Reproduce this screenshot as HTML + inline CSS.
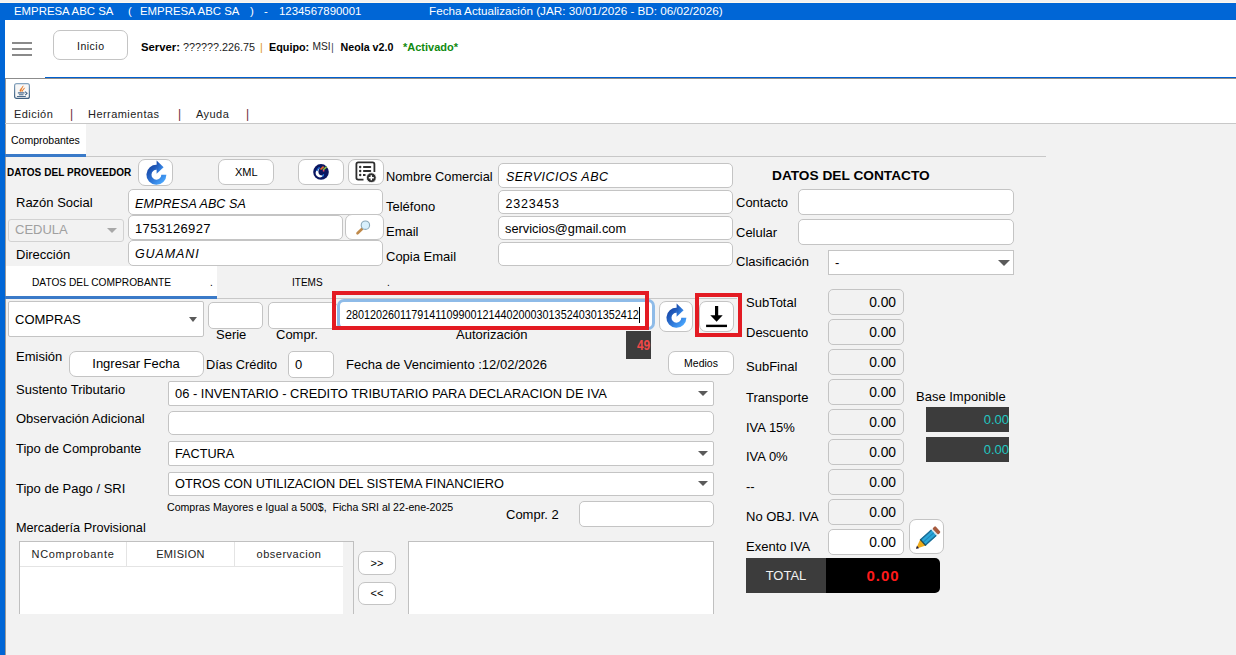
<!DOCTYPE html>
<html><head><meta charset="utf-8">
<style>
*{box-sizing:border-box;margin:0;padding:0}
html,body{width:1236px;height:655px;overflow:hidden;background:#f2f2f2;font-family:"Liberation Sans",sans-serif;color:#000;position:relative}
.a{position:absolute}
.t{position:absolute;white-space:nowrap;line-height:20px;height:20px}
.fld{position:absolute;background:#fff;border:1px solid #c4c4c4;border-radius:5px}
.btn{position:absolute;background:#fff;border:1px solid #c4c4c4;border-radius:7px}
.cmb{position:absolute;background:#fff;border:1px solid #c4c4c4}
.arr{position:absolute;width:0;height:0;border-left:6px solid transparent;border-right:6px solid transparent;border-top:6px solid #5a5a5a}
.lbl{font-size:13px;margin-top:1px}
</style></head><body>
<!-- top strip -->
<div class="a" style="left:0;top:0;width:1236px;height:2px;background:#f2f2f2"></div>
<div class="a" style="left:0;top:2px;width:1236px;height:1px;background:#fdf8ee"></div>
<div class="a" style="left:0;top:3px;width:1236px;height:17px;background:#0066d6"></div>
<div class="a" style="left:0;top:3px;width:5px;height:652px;background:#0066d6"></div>
<!-- title text -->
<div class="t" id="tt1" style="left:14px;top:1px;color:#fff;font-size:11.4px">EMPRESA ABC SA</div>
<div class="t" id="tt2" style="left:128px;top:1px;color:#fff;font-size:11.4px">(</div>
<div class="t" id="tt3" style="left:140px;top:1px;color:#fff;font-size:11.4px">EMPRESA ABC SA</div>
<div class="t" id="tt4" style="left:250px;top:1px;color:#fff;font-size:11.4px">)</div>
<div class="t" id="tt5" style="left:264px;top:1px;color:#fff;font-size:11.4px">-</div>
<div class="t" id="tt6" style="left:279px;top:1px;color:#fff;font-size:11.4px">1234567890001</div>
<div class="t" id="tt7" style="left:429px;top:1px;color:#fff;font-size:11.7px">Fecha Actualización (JAR: 30/01/2026 - BD: 06/02/2026)</div>

<!-- header white -->
<div class="a" style="left:5px;top:20px;width:1231px;height:58px;background:#fff"></div>
<div class="a" style="left:12px;top:42px;width:20px;height:2px;background:#8a8a8a"></div>
<div class="a" style="left:12px;top:48px;width:20px;height:2px;background:#8a8a8a"></div>
<div class="a" style="left:12px;top:54px;width:20px;height:2px;background:#8a8a8a"></div>
<div class="btn" style="left:53px;top:30px;width:75px;height:30px;border-radius:7px"></div>
<div class="t" id="inicio" style="left:77px;top:35.5px;font-size:10.5px;letter-spacing:0.5px;color:#111">Inicio</div>
<div class="t" id="srv1" style="left:141px;top:37px;font-size:11.3px;font-weight:bold">Server:</div>
<div class="t" id="srv2" style="left:183px;top:37px;font-size:10.8px;color:#222">??????.226.75</div>
<div class="t" id="srv3" style="left:260px;top:37px;font-size:11px;color:#e0962a">|</div>
<div class="t" id="srv4" style="left:269px;top:37px;font-size:10.8px;font-weight:bold">Equipo:</div>
<div class="t" id="srv5" style="left:312.5px;top:37px;font-size:10.2px;color:#222">MSI</div>
<div class="t" id="srv6" style="left:331px;top:37px;font-size:11px;color:#50506a">|</div>
<div class="t" id="srv7" style="left:340.5px;top:37px;font-size:10.7px;font-weight:bold">Neola v2.0</div>
<div class="t" id="srv8" style="left:403px;top:37px;font-size:11px;font-weight:bold;color:#108a10">*Activado*</div>
<div class="a" style="left:5px;top:78px;width:1231px;height:1px;background:#8c8c8c"></div>
<div class="a" style="left:45px;top:77px;width:1191px;height:1px;background:#0060d0"></div>

<!-- menu area -->
<div class="a" style="left:5px;top:79px;width:1231px;height:44px;background:#fff"></div>
<div class="a" style="left:5px;top:79px;width:1px;height:576px;background:#9a9a9a"></div>

<div class="t" id="menu" style="left:14px;top:103.5px;font-size:11px;letter-spacing:0.45px;color:#222">Edición</div>
<div class="t" style="left:70px;top:103.5px;font-size:12px;color:#6a2a3a">|</div>
<div class="t" id="herr" style="left:88px;top:103.5px;font-size:11px;letter-spacing:0.45px;color:#222">Herramientas</div>
<div class="t" style="left:178px;top:103.5px;font-size:12px;color:#6a2a3a">|</div>
<div class="t" id="ayuda" style="left:196px;top:103.5px;font-size:11px;letter-spacing:0.45px;color:#222">Ayuda</div>
<div class="t" style="left:246px;top:103.5px;font-size:12px;color:#6a2a3a">|</div>
<div class="a" style="left:5px;top:123px;width:1231px;height:1px;background:#c8c8c8"></div>

<!-- main tab -->
<div class="a" style="left:6px;top:124px;width:80px;height:31px;background:#fff"></div>
<div class="a" style="left:5px;top:154px;width:81px;height:3px;background:#3a7ac8"></div>
<div class="t" id="comp" style="left:11px;top:130px;font-size:10.5px">Comprobantes</div>
<div class="a" style="left:86px;top:156px;width:960px;height:1px;background:#c8c8c8"></div>


<!-- PROVEEDOR -->
<div class="t" id="dprov" style="left:7px;top:163px;font-size:10px;font-weight:bold;letter-spacing:0.05px">DATOS DEL PROVEEDOR</div>
<div class="btn" style="left:138px;top:159px;width:35px;height:27px"></div>
<div class="btn" style="left:218px;top:159px;width:55.5px;height:25.5px"></div>
<div class="t" id="xml" style="left:235px;top:162px;font-size:11px">XML</div>
<div class="btn" style="left:298px;top:159px;width:45.5px;height:25.5px"></div>
<div class="btn" style="left:348px;top:159px;width:35.5px;height:25.5px"></div>

<div class="t lbl" id="razon" style="left:16px;top:192px">Razón Social</div>
<div class="fld" style="left:128px;top:189px;width:255px;height:26px"></div>
<div class="t" id="vrazon" style="left:135px;top:193.5px;font-size:12.5px;font-style:italic;letter-spacing:0.1px">EMPRESA ABC SA</div>
<div class="cmb" style="left:8px;top:219px;width:116px;height:23px;background:#f2f2f2;border-color:#d2d2d2;border-radius:3px"></div>
<div class="t" id="ced" style="left:15px;top:220px;font-size:13px;color:#a0a0a0">CEDULA</div>
<div class="arr" style="left:107px;top:228px;border-top-color:#a8a8a8;border-left-width:5px;border-right-width:5px;border-top-width:5px"></div>
<div class="fld" style="left:128px;top:214.5px;width:215px;height:25.5px"></div>
<div class="t" id="vced" style="left:135px;top:218.5px;font-size:13px;letter-spacing:0.35px">1753126927</div>
<div class="btn" style="left:345px;top:214px;width:38.5px;height:26px"></div>
<div class="t lbl" id="dir" style="left:16px;top:244px">Dirección</div>
<div class="fld" style="left:128px;top:240px;width:255px;height:26px"></div>
<div class="t" id="vdir" style="left:135px;top:243.5px;font-size:12.5px;font-style:italic;letter-spacing:0.9px">GUAMANI</div>

<div class="t lbl" id="ncom" style="left:386px;top:166px;font-size:12.8px">Nombre Comercial</div>
<div class="fld" style="left:498px;top:163px;width:235px;height:25px"></div>
<div class="t" id="vncom" style="left:506px;top:166.5px;font-size:12.5px;font-style:italic;letter-spacing:0.45px">SERVICIOS ABC</div>
<div class="t lbl" id="tel" style="left:386px;top:196px">Teléfono</div>
<div class="fld" style="left:498px;top:190px;width:235px;height:24px"></div>
<div class="t" id="vtel" style="left:505.5px;top:193.5px;font-size:12.5px;letter-spacing:0.8px">2323453</div>
<div class="t lbl" id="email" style="left:386px;top:221px">Email</div>
<div class="fld" style="left:498px;top:216px;width:235px;height:24px"></div>
<div class="t" id="vemail" style="left:505px;top:218.5px;font-size:12.8px;letter-spacing:0px">servicios@gmail.com</div>
<div class="t lbl" id="cemail" style="left:386px;top:246px">Copia Email</div>
<div class="fld" style="left:498px;top:242px;width:235px;height:24px"></div>

<div class="t" id="dcont" style="left:772px;top:166px;font-size:13.7px;font-weight:bold">DATOS DEL CONTACTO</div>
<div class="t lbl" id="contacto" style="left:736px;top:192px">Contacto</div>
<div class="fld" style="left:798px;top:189px;width:216px;height:26px"></div>
<div class="t lbl" id="celular" style="left:736px;top:222px">Celular</div>
<div class="fld" style="left:798px;top:219px;width:216px;height:26px"></div>
<div class="t lbl" id="clasif" style="left:736px;top:251px">Clasificación</div>
<div class="cmb" style="left:828px;top:250px;width:186px;height:25px"></div>
<div class="t" style="left:835px;top:253px;font-size:13px">-</div>
<div class="arr" style="left:998px;top:260px"></div>

<!-- COMPROBANTE TABS -->
<div class="a" style="left:6px;top:266px;width:211px;height:30px;background:#fff"></div>
<div class="a" style="left:5px;top:296px;width:212px;height:3px;background:#3a7ac8"></div>
<div class="t" id="tdc" style="left:32px;top:273px;font-size:10.2px">DATOS DEL COMPROBANTE</div>
<div class="t" style="left:210px;top:273px;font-size:10px">.</div>
<div class="t" id="titems" style="left:292px;top:273px;font-size:10px">ITEMS</div>
<div class="t" style="left:387px;top:273px;font-size:10px">.</div>

<div class="a" style="left:217px;top:298px;width:520px;height:1px;background:#c8c8c8"></div>
<!-- COMPROBANTE -->
<div class="cmb" style="left:8px;top:301px;width:196px;height:35.5px;border-radius:2px"></div>
<div class="t" id="compras" style="left:15px;top:310px;font-size:13px">COMPRAS</div>
<div class="arr" style="left:189px;top:317px;border-left-width:4.5px;border-right-width:4.5px;border-top-width:5.5px"></div>
<div class="fld" style="left:208px;top:302px;width:55px;height:27px"></div>
<div class="fld" style="left:268px;top:302px;width:70px;height:27px"></div>
<div class="t lbl" id="serie" style="left:216px;top:324px">Serie</div>
<div class="t lbl" id="compr" style="left:276px;top:324px">Compr.</div>

<div class="a" style="left:337px;top:299px;width:318px;height:31px;border:3px solid #8ebbe8;border-radius:7px;background:#fff"></div>
<div class="t" id="aut" style="left:345.5px;top:305px;font-size:13.5px;transform:scaleX(0.80);transform-origin:0 0">2801202601179141109900121440200030135240301352412</div>
<div class="a" style="left:639px;top:307px;width:1px;height:16px;background:#000"></div>
<div class="a" style="left:332px;top:291px;width:317px;height:39px;border:4px solid #e31b23"></div>
<div class="t lbl" id="autz" style="left:456px;top:324px">Autorización</div>
<div class="a" style="left:626px;top:331px;width:25px;height:28px;background:#3c3c3c"></div>
<div class="t" id="n49" style="left:637px;top:334.5px;font-size:14px;font-weight:bold;color:#f04848;transform:scaleX(0.85);transform-origin:0 0">49</div>
<div class="btn" style="left:659px;top:301px;width:34px;height:31px"></div>
<div class="btn" style="left:699px;top:301px;width:35px;height:31px"></div>
<div class="a" style="left:695px;top:293px;width:47px;height:44px;border:4px solid #e31b23"></div>

<div class="t lbl" id="emision" style="left:16px;top:346px">Emisión</div>
<div class="btn" style="left:68.5px;top:351px;width:135px;height:25.5px"></div>
<div class="t lbl" id="ingf" style="left:69px;top:353px;width:134px;text-align:center">Ingresar Fecha</div>
<div class="t lbl" id="dias" style="left:206px;top:354px;font-size:12.8px">Días Crédito</div>
<div class="fld" style="left:288px;top:351px;width:46px;height:26.5px"></div>
<div class="t lbl" style="left:295px;top:354px">0</div>
<div class="t lbl" id="fven" style="left:346px;top:354px">Fecha de Vencimiento :12/02/2026</div>
<div class="btn" style="left:668px;top:351px;width:66px;height:24px"></div>
<div class="t" id="medios" style="left:668px;top:353px;width:66px;text-align:center;font-size:10.5px">Medios</div>

<div class="t lbl" id="sust" style="left:16px;top:379px">Sustento Tributario</div>
<div class="cmb" style="left:168px;top:381px;width:546px;height:25px;border-radius:2px"></div>
<div class="t lbl" id="vsust" style="left:175px;top:383px;font-size:12.9px">06 - INVENTARIO - CREDITO TRIBUTARIO PARA DECLARACION DE IVA</div>
<div class="arr" style="left:698px;top:391px;border-left-width:5px;border-right-width:5px;border-top-width:5px"></div>
<div class="t lbl" id="obs" style="left:16px;top:408px">Observación Adicional</div>
<div class="fld" style="left:168px;top:411px;width:546px;height:23.5px"></div>
<div class="t lbl" id="tcomp" style="left:16px;top:438px">Tipo de Comprobante</div>
<div class="cmb" style="left:168px;top:441px;width:546px;height:25px;border-radius:2px"></div>
<div class="t lbl" id="vfact" style="left:175px;top:443px;font-size:12.7px">FACTURA</div>
<div class="arr" style="left:698px;top:451px;border-left-width:5px;border-right-width:5px;border-top-width:5px"></div>
<div class="t lbl" id="tpago" style="left:16px;top:478px">Tipo de Pago / SRI</div>
<div class="cmb" style="left:168px;top:471.5px;width:546px;height:24.5px;border-radius:2px"></div>
<div class="t lbl" id="votros" style="left:175px;top:473px;font-size:12.75px">OTROS CON UTILIZACION DEL SISTEMA FINANCIERO</div>
<div class="arr" style="left:698px;top:481px;border-left-width:5px;border-right-width:5px;border-top-width:5px"></div>
<div class="t" id="cmay" style="left:167px;top:497px;font-size:10.6px">Compras Mayores e Igual a 500$,&nbsp; Ficha SRI al 22-ene-2025</div>
<div class="t lbl" id="compr2" style="left:506px;top:504px">Compr. 2</div>
<div class="fld" style="left:578.5px;top:501px;width:135.5px;height:26px"></div>
<div class="t lbl" id="merc" style="left:16px;top:517px;font-size:12.7px">Mercadería Provisional</div>

<!-- table -->
<div class="a" style="left:18.5px;top:541px;width:335.5px;height:73px;border:1px solid #c0c0c0;border-bottom:none;background:#f2f2f2"></div>
<div class="a" style="left:20px;top:542px;width:323px;height:72px;background:#fff"></div>
<div class="a" style="left:20px;top:566px;width:323px;height:1px;background:#e4e4e4"></div>
<div class="a" style="left:126px;top:542px;width:1px;height:24px;background:#e4e4e4"></div>
<div class="a" style="left:234px;top:542px;width:1px;height:24px;background:#e4e4e4"></div>
<div class="t" id="hnc" style="left:20px;top:544px;width:106px;text-align:center;font-size:11px;letter-spacing:0.7px;color:#222">NComprobante</div>
<div class="t" id="hem" style="left:127px;top:544px;width:107px;text-align:center;font-size:11px;letter-spacing:0.3px;color:#222">EMISION</div>
<div class="t" id="hob" style="left:235px;top:544px;width:108px;text-align:center;font-size:11px;letter-spacing:0.5px;color:#222">observacion</div>
<div class="btn" style="left:358px;top:551px;width:38px;height:24px"></div>
<div class="t" style="left:358px;top:553px;width:38px;text-align:center;font-size:11px">&gt;&gt;</div>
<div class="btn" style="left:358px;top:582px;width:38px;height:23px"></div>
<div class="t" style="left:358px;top:583px;width:38px;text-align:center;font-size:11px">&lt;&lt;</div>
<div class="a" style="left:408px;top:541px;width:306px;height:73px;border:1px solid #c0c0c0;border-bottom:none;background:#fff"></div>

<!-- totals -->
<div class="t lbl" id="lsub" style="left:746px;top:292px">SubTotal</div>
<div class="t lbl" style="left:746px;top:322px">Descuento</div>
<div class="t lbl" style="left:746px;top:356px">SubFinal</div>
<div class="t lbl" style="left:746px;top:387px">Transporte</div>
<div class="t lbl" style="left:746px;top:417px">IVA 15%</div>
<div class="t lbl" style="left:746px;top:446px">IVA 0%</div>
<div class="t lbl" style="left:746px;top:476px">--</div>
<div class="t lbl" style="left:746px;top:506px">No OBJ. IVA</div>
<div class="t lbl" style="left:746px;top:536px">Exento IVA</div>
<div class="fld" style="left:828px;top:289px;width:76px;height:26px;background:#f2f2f2"></div>
<div class="t lbl" style="left:828px;top:292px;width:68px;text-align:right;font-size:13.8px">0.00</div>
<div class="fld" style="left:828px;top:319px;width:76px;height:26px;background:#f2f2f2"></div>
<div class="t lbl" style="left:828px;top:322px;width:68px;text-align:right;font-size:13.8px">0.00</div>
<div class="fld" style="left:828px;top:349px;width:76px;height:26px;background:#f2f2f2"></div>
<div class="t lbl" style="left:828px;top:352px;width:68px;text-align:right;font-size:13.8px">0.00</div>
<div class="fld" style="left:828px;top:379px;width:76px;height:26px;background:#f2f2f2"></div>
<div class="t lbl" style="left:828px;top:382px;width:68px;text-align:right;font-size:13.8px">0.00</div>
<div class="fld" style="left:828px;top:409px;width:76px;height:26px;background:#f2f2f2"></div>
<div class="t lbl" style="left:828px;top:412px;width:68px;text-align:right;font-size:13.8px">0.00</div>
<div class="fld" style="left:828px;top:439px;width:76px;height:26px;background:#f2f2f2"></div>
<div class="t lbl" style="left:828px;top:442px;width:68px;text-align:right;font-size:13.8px">0.00</div>
<div class="fld" style="left:828px;top:469px;width:76px;height:26px;background:#f2f2f2"></div>
<div class="t lbl" style="left:828px;top:472px;width:68px;text-align:right;font-size:13.8px">0.00</div>
<div class="fld" style="left:828px;top:499px;width:76px;height:26px;background:#f2f2f2"></div>
<div class="t lbl" style="left:828px;top:502px;width:68px;text-align:right;font-size:13.8px">0.00</div>
<div class="fld" style="left:828px;top:529px;width:76px;height:26px;background:#fff"></div>
<div class="t lbl" style="left:828px;top:532px;width:68px;text-align:right;font-size:13.8px">0.00</div>

<div class="t lbl" id="bimp" style="left:916px;top:386px">Base Imponible</div>
<div class="a" style="left:926px;top:407px;width:83px;height:25px;background:#3c3c3c"></div>
<div class="t lbl" style="left:926px;top:409px;width:83px;text-align:right;color:#22c8c2">0.00</div>
<div class="a" style="left:926px;top:437px;width:83px;height:25px;background:#3c3c3c"></div>
<div class="t lbl" style="left:926px;top:439px;width:83px;text-align:right;color:#22c8c2">0.00</div>
<div class="btn" style="left:909px;top:519px;width:35px;height:35px"></div>
<div class="a" style="left:746px;top:558px;width:80px;height:35px;background:#3c3c3c"></div>
<div class="t lbl" id="ltotal" style="left:746px;top:565px;width:80px;text-align:center;color:#f2f2f2">TOTAL</div>
<div class="a" style="left:826px;top:558px;width:114px;height:35px;background:#000;border-radius:0 5px 5px 0"></div>
<div class="t" id="vtotal" style="left:826px;top:566px;width:114px;text-align:center;color:#ff1a1a;font-size:15px;font-weight:bold;letter-spacing:1px">0.00</div>

<!-- icons -->
<svg class="a" style="left:139px;top:160px" width="34" height="26"><defs><linearGradient id="rg1" x1="0" y1="0" x2="1" y2="1"><stop offset="0" stop-color="#1848a8"/><stop offset="0.55" stop-color="#2f78d8"/><stop offset="1" stop-color="#4aa8ff"/></linearGradient></defs>
<path d="M24.85,14.80 A7.45,7.45 0 1 1 18.00,7.35" fill="none" stroke="url(#rg1)" stroke-width="5.1"/>
<path d="M17.60,0.55 L24.60,7.15 L17.60,13.75 Z" fill="url(#rg1)"/></svg>
<svg class="a" style="left:659px;top:301px" width="34" height="31"><defs><linearGradient id="rg2" x1="0" y1="0" x2="1" y2="1"><stop offset="0" stop-color="#1848a8"/><stop offset="0.55" stop-color="#2f78d8"/><stop offset="1" stop-color="#4aa8ff"/></linearGradient></defs>
<path d="M24.85,16.80 A7.45,7.45 0 1 1 18.00,9.35" fill="none" stroke="url(#rg2)" stroke-width="5.1"/>
<path d="M17.60,2.55 L24.60,9.15 L17.60,15.75 Z" fill="url(#rg2)"/></svg>
<svg class="a" style="left:699px;top:301px" width="35" height="31">
<rect x="16" y="5" width="3.2" height="12" fill="#000"/>
<path d="M11.3,14.2 L23.7,14.2 L17.6,20.8 Z" fill="#000"/>
<rect x="7.1" y="23.7" width="20.9" height="2.4" fill="#000"/>
</svg>
<svg class="a" style="left:299px;top:160px" width="44" height="25">
<circle cx="22" cy="11.9" r="7.8" fill="#0a1660"/>
<circle cx="21" cy="13" r="4.4" fill="#fff"/>
<circle cx="23.3" cy="11.6" r="3.9" fill="#0a1660"/>
<path d="M20.6,7.2 Q18.6,8.6 17.8,11" stroke="#1a6ad0" stroke-width="1.4" fill="none"/>
<path d="M24.5,14 Q24.8,15.8 23.2,16.8" stroke="#1a6ad0" stroke-width="1.3" fill="none"/>
<path d="M21.5,9.5 L24.6,6.6" stroke="#ee6a2a" stroke-width="1.6"/>
<path d="M24,10 L27.5,6.8" stroke="#8abf3a" stroke-width="1.6"/>
<circle cx="24.6" cy="10.7" r="0.9" fill="#e84a6a"/>
</svg>
<svg class="a" style="left:348px;top:160px" width="35" height="25">
<path d="M15.5,19.6 L10.2,19.6 Q8.4,19.6 8.4,17.8 L8.4,4.2 Q8.4,2.4 10.2,2.4 L24.6,2.4 Q26.4,2.4 26.4,4.2 L26.4,12" fill="none" stroke="#2e2e2e" stroke-width="1.8"/>
<circle cx="12.2" cy="7" r="1.2" fill="#2e2e2e"/><circle cx="12.2" cy="11" r="1.2" fill="#2e2e2e"/><circle cx="12.2" cy="15" r="1.2" fill="#2e2e2e"/>
<rect x="15" y="6" width="8.2" height="2" rx="0.8" fill="#2e2e2e"/><rect x="15" y="10" width="8.2" height="2" rx="0.8" fill="#2e2e2e"/><rect x="15" y="14" width="2.5" height="2" fill="#2e2e2e"/>
<circle cx="23.3" cy="17.7" r="4.9" fill="#2e2e2e" stroke="#fff" stroke-width="0.8"/>
<path d="M23.3,15.2 V20.2 M20.8,17.7 H25.8" stroke="#fff" stroke-width="1.5"/>
</svg>
<svg class="a" style="left:345px;top:215px" width="38" height="25">
<path d="M17.5,13.5 L12.5,18.3" stroke="#c08a4a" stroke-width="2.6" stroke-linecap="round"/>
<circle cx="20.4" cy="10.2" r="4.2" fill="#d8f0fc" stroke="#8aa8b8" stroke-width="1.1"/>
</svg>
<svg class="a" style="left:909px;top:519px" width="35" height="35">
<g transform="rotate(-41.8 17.4 19.35) translate(0 0.8)">
<path d="M2.799999999999999,19.35 L12.2,15.150000000000002 L12.2,23.55 Z" fill="#eeaa18"/>
<path d="M2.799999999999999,19.35 L5.399999999999999,17.75 L5.399999999999999,20.950000000000003 Z" fill="#141440"/>
<rect x="12.2" y="15.150000000000002" width="14.6" height="8.4" fill="#2aa6d8"/>
<rect x="12.2" y="15.150000000000002" width="14.6" height="1.3" fill="#1d6a90"/>
<rect x="12.2" y="22.25" width="14.6" height="1.3" fill="#1d6a90"/>
<rect x="12.2" y="18.85" width="14.6" height="1" fill="#1f86b8"/>
<rect x="11.399999999999999" y="15.150000000000002" width="1.4" height="8.4" fill="#204a50"/>
<rect x="26.799999999999997" y="15.150000000000002" width="1.6" height="8.4" fill="#d8e4ea"/>
<rect x="28.4" y="15.150000000000002" width="3.8" height="8.4" rx="1.2" fill="#a65a3e"/>
</g>
</svg>
<svg class="a" style="left:14px;top:83px" width="16" height="16">
<defs><linearGradient id="jb" x1="0" y1="0" x2="0" y2="1"><stop offset="0" stop-color="#86a4bf"/><stop offset="1" stop-color="#3e5f80"/></linearGradient></defs>
<rect x="0.6" y="0.6" width="14.8" height="14.8" rx="2" fill="#f7f7f7" stroke="url(#jb)" stroke-width="1.2"/>
<path d="M6.2,8.6 C5,6.8 7.8,5.2 9.2,2.8 C8.6,5 6.8,6.4 7.2,8.6 M8,8.4 C7.6,6.8 10,6.2 10.6,4.8 C10.2,6.6 8.4,7.2 8.6,8.4" fill="#e8741c" stroke="#e8741c" stroke-width="0.5"/>
<rect x="3.8" y="9.2" width="6.8" height="1.4" rx="0.6" fill="#4a6a8c"/>
<rect x="4.8" y="11.2" width="4.8" height="1.1" rx="0.5" fill="#4a6a8c"/>
<rect x="2.9" y="13" width="9" height="1" rx="0.5" fill="#4a6a8c"/>
<path d="M11,8.6 L13,10.3 L11.2,12.2" stroke="#4a6a8c" stroke-width="1.2" fill="none"/>
</svg>
</body></html>
